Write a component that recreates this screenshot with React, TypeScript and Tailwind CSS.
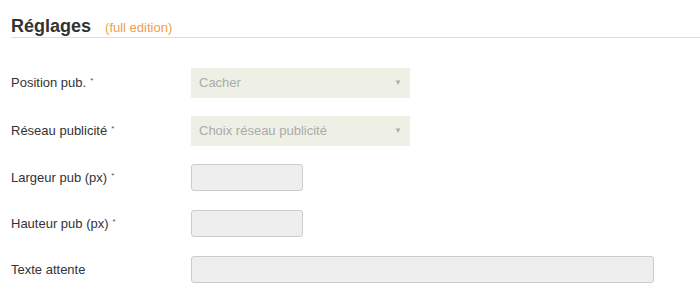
import React from "react";

const Star = () => <sup className="text-[8px] text-[#555] ml-[4px] relative -top-[4px]">*</sup>;

function Row({ label, req, children, h }: { label: string; req?: boolean; children: React.ReactNode; h: string }) {
  return (
    <div className={`flex items-center ${h}`}>
      <div className="w-[180px] text-[13px] text-[#333]">
        {label}
        {req && <Star />}
      </div>
      {children}
    </div>
  );
}

function Select({ text }: { text: string }) {
  return (
    <div className="w-[219px] h-[30px] bg-[#eef0e6] flex items-center justify-between pl-[8px] pr-[8px] text-[13px] text-[#aaaaaa]">
      <span>{text}</span>
      <span className="text-[8px] text-[#b0b0b0]">▼</span>
    </div>
  );
}

function Input({ w }: { w: string }) {
  return <div className={`${w} h-[27px] bg-[#eeeeee] border border-[#cccccc] rounded-[3px]`} />;
}

export default function App() {
  return (
    <div className="w-[700px] h-[300px] bg-white overflow-hidden" style={{ fontFamily: '"Liberation Sans", Arial, sans-serif' }}>
      <div className="ml-[11px] pt-[17px] border-b border-[#dddddd] pb-[2px] flex items-baseline leading-none">
        <span className="text-[18px] font-bold text-[#333]">Réglages</span>
        <span className="ml-[14px] text-[13px] text-[#f0a04b]">(full edition)</span>
      </div>
      <div className="pl-[11px] pt-[30px] flex flex-col">
        <Row label="Position pub." req h="h-[30px]">
          <Select text="Cacher" />
        </Row>
        <div className="h-[18px]" />
        <Row label="Réseau publicité" req h="h-[30px]">
          <Select text="Choix réseau publicité" />
        </Row>
        <div className="h-[18px]" />
        <Row label="Largeur pub (px)" req h="h-[27px]">
          <Input w="w-[112px]" />
        </Row>
        <div className="h-[19px]" />
        <Row label="Hauteur pub (px)" req h="h-[27px]">
          <Input w="w-[112px]" />
        </Row>
        <div className="h-[19px]" />
        <Row label="Texte attente" h="h-[27px]">
          <Input w="w-[463px]" />
        </Row>
      </div>
    </div>
  );
}
